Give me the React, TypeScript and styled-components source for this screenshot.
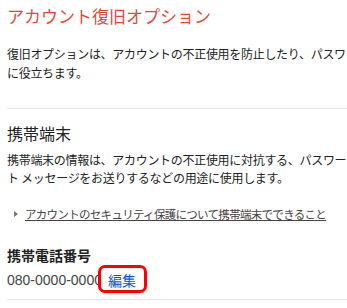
import React from 'react'
import styled, { createGlobalStyle } from 'styled-components'

const Global = createGlobalStyle`
  html, body {
    margin: 0;
    padding: 0;
    background: #fff;
    overflow: hidden;
  }
  body {
    font-family: "Noto Sans CJK JP", "Liberation Sans", sans-serif;
    color: #222;
  }
`

const Page = styled.div`
  width: 347px;
  height: 308px;
  overflow: hidden;
  padding-left: 7px;
  box-sizing: border-box;
`

const Column = styled.div`
  width: 520px;
`

const Title = styled.h1`
  margin: 4px 0 0;
  font-size: 17px;
  font-weight: normal;
  line-height: 24px;
  color: #dd4b39;
  white-space: nowrap;
`

const Text = styled.p<{ $top: number }>`
  margin: ${({ $top }) => $top}px 0 0;
  font-size: 12px;
  letter-spacing: -0.3px;
  line-height: ${({ $top }) => ($top > 10 ? 19 : 18)}px;
  white-space: nowrap;
  color: #222;
`

const Divider = styled.hr<{ $top: number }>`
  margin: ${({ $top }) => $top}px 0 0;
  border: 0;
  height: 1px;
  background: #e5e5e5;
`

const SectionTitle = styled.h2`
  margin: 13px 0 0;
  font-size: 16px;
  font-weight: normal;
  line-height: 22px;
  color: #222;
`

const MoreRow = styled.div`
  margin-top: 18px;
  display: flex;
  align-items: center;
  line-height: 18px;
  white-space: nowrap;
`

const Arrow = styled.span`
  width: 0;
  height: 0;
  margin: 0 7px 0 7px;
  border-top: 3.5px solid transparent;
  border-bottom: 3.5px solid transparent;
  border-left: 4px solid #777;
`

const MoreLink = styled.a`
  font-size: 11.5px;
  letter-spacing: -0.7px;
  color: #444;
  text-decoration: underline;
  cursor: pointer;
`

const FieldLabel = styled.h3`
  margin: 22px 0 0;
  font-size: 14px;
  font-weight: bold;
  line-height: 20px;
  color: #222;
`

const FieldRow = styled.div`
  margin-top: 5px;
  display: flex;
  align-items: center;
  gap: 6px;
  line-height: 20px;
  height: 20px;
`

const Phone = styled.span`
  font-family: "Liberation Sans", Arial, sans-serif;
  font-size: 14px;
  color: #444;
`

const Edit = styled.a`
  position: relative;
  z-index: 0;
  display: inline-block;
  font-size: 14px;
  color: #1155cc;
  text-decoration: none;
  cursor: pointer;

  &::before {
    content: '';
    position: absolute;
    z-index: -1;
    left: -10px;
    right: -11px;
    top: -5px;
    bottom: -3px;
    border: 3px solid #ff0000;
    border-radius: 7px;
    background: #fff;
  }
`

export default function App() {
  return (
    <>
      <Global />
      <Page>
        <Column>
          <Title>アカウント復旧オプション</Title>
          <Text $top={16}>
            復旧オプションは、アカウントの不正使用を防止したり、パスワードを忘れた場合にアカウントへのアクセスを回復したりするの
            <br />
            に役立ちます。
          </Text>
          <Divider $top={26} />

          <SectionTitle>携帯端末</SectionTitle>
          <Text $top={7}>
            携帯端末の情報は、アカウントの不正使用に対抗する、パスワードの再設定用コードを送信する、アラー
            <br />
            ト メッセージをお送りするなどの用途に使用します。
          </Text>
          <MoreRow>
            <Arrow />
            <MoreLink>アカウントのセキュリティ保護について携帯端末でできること</MoreLink>
          </MoreRow>

          <FieldLabel>携帯電話番号</FieldLabel>
          <FieldRow>
            <Phone>080-0000-0000</Phone>
            <Edit>編集</Edit>
          </FieldRow>
          <Divider $top={9} />
        </Column>
      </Page>
    </>
  )
}
